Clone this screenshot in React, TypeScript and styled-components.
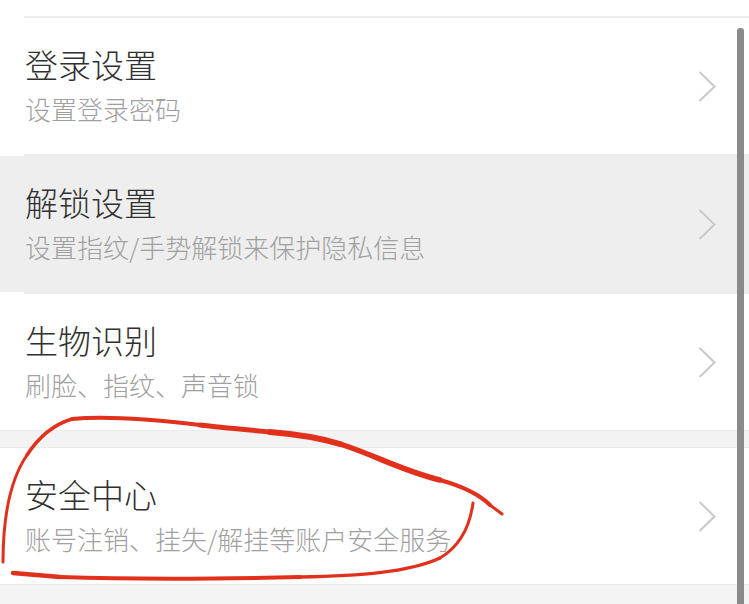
import React from "react";
import styled, { createGlobalStyle } from "styled-components";

const GlobalStyle = createGlobalStyle`
  html, body {
    margin: 0;
    padding: 0;
    background: #f4f4f4;
  }
  body {
    font-family: "Noto Sans CJK SC", "Noto Sans", sans-serif;
    overflow: hidden;
  }
  * { box-sizing: border-box; }
`;

const Page = styled.div`
  position: relative;
  width: 749px;
  height: 604px;
  overflow: hidden;
  background: #f4f4f4;
`;

const List = styled.div`
  display: flex;
  flex-direction: column;
  background: #ffffff;
`;

const TopSpace = styled.div`
  height: 16px;
  background: #ffffff;
`;

const Divider = styled.div`
  height: 2px;
  margin-left: 24px;
  background: #ededed;
`;

const SectionGap = styled.div`
  height: 18px;
  background: #f3f3f3;
  border-top: 1px solid #ebebeb;
  border-bottom: 1px solid #ebebeb;
`;

const Item = styled.div<{ $pressed?: boolean }>`
  background: ${(p) => (p.$pressed ? "#eeeeee" : "#ffffff")};
`;

const Row = styled.div`
  display: grid;
  grid-template-columns: 1fr auto;
  align-items: center;
  height: 136px;
  padding: 0 33px 0 25px;
`;

const TextBlock = styled.div`
  display: flex;
  flex-direction: column;
  gap: 7px;
  margin-bottom: 1px;
`;

const Title = styled.div`
  font-size: 33px;
  line-height: 40px;
  color: #303030;
  font-weight: 300;
  white-space: nowrap;
`;

const Subtitle = styled.div`
  font-size: 26px;
  line-height: 36px;
  color: #a0a0a0;
  font-weight: 300;
  white-space: nowrap;
`;

const Bottom = styled.div`
  height: 40px;
  background: #f4f4f4;
  border-top: 1px solid #ebebeb;
`;

const Scrollbar = styled.div`
  position: absolute;
  right: 5px;
  top: 28px;
  bottom: 0;
  width: 7px;
  border-radius: 3px 3px 0 0;
  background: #8a8a8a;
`;

const Annotation = styled.svg`
  position: absolute;
  left: 0;
  top: 0;
  pointer-events: none;
`;

const Chevron = () => (
  <svg width="18" height="31" viewBox="0 0 18 31" fill="none">
    <polyline
      points="1.5,1 16.5,15.5 1.5,30"
      stroke="#c9c9c9"
      strokeWidth="2"
      strokeLinejoin="miter"
    />
  </svg>
);

type Entry = { title: string; sub: string; pressed?: boolean };

const ListItem = ({ title, sub, pressed }: Entry) => (
  <Item $pressed={pressed}>
    <Row>
      <TextBlock>
        <Title>{title}</Title>
        <Subtitle>{sub}</Subtitle>
      </TextBlock>
      <Chevron />
    </Row>
  </Item>
);

const RED = "#e1311d";

const strokes: { w: number; d: string }[] = [
  { w: 3, d: "M3,562 C3,520 10,480 27,455" },
  { w: 3.5, d: "M27,455 C38,438 52,425 72,419" },
  { w: 4, d: "M72,419 C100,416 150,419 200,425" },
  { w: 5, d: "M200,425 C225,428 250,430 270,432" },
  { w: 6, d: "M270,432 C295,434 320,438 340,444" },
  { w: 5.5, d: "M340,444 C375,455 400,470 440,480" },
  { w: 4, d: "M440,480 C465,487 480,495 490,505" },
  { w: 3, d: "M490,505 L502,514" },
  { w: 3, d: "M473,503 C470,525 462,545 440,558" },
  { w: 3.5, d: "M440,558 C410,572 360,576 300,577" },
  { w: 4, d: "M300,577 C220,579 120,579 60,577" },
  { w: 4.5, d: "M60,577 L13,573" },
];

export default function App() {
  return (
    <Page>
      <GlobalStyle />
      <List>
        <TopSpace />
        <Divider />
        <ListItem title="登录设置" sub="设置登录密码" />
        <Divider />
        <ListItem title="解锁设置" sub="设置指纹/手势解锁来保护隐私信息" pressed />
        <Divider />
        <ListItem title="生物识别" sub="刷脸、指纹、声音锁" />
        <SectionGap />
        <ListItem title="安全中心" sub="账号注销、挂失/解挂等账户安全服务" />
      </List>
      <Bottom />
      <Scrollbar />
      <Annotation width="749" height="604" viewBox="0 0 749 604">
        <g fill="none" stroke={RED} strokeLinecap="round" strokeLinejoin="round">
          {strokes.map((s, i) => (
            <path key={i} strokeWidth={s.w} d={s.d} />
          ))}
        </g>
      </Annotation>
    </Page>
  );
}
